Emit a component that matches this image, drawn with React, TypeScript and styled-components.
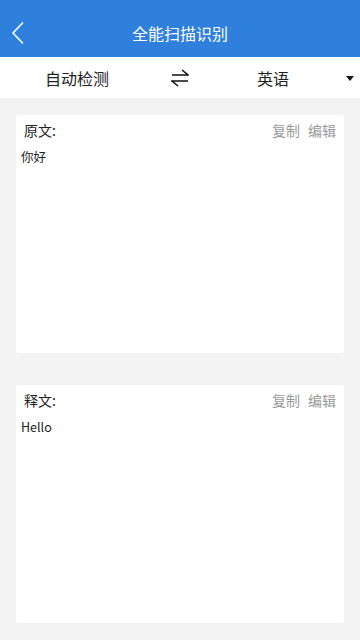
import React from "react";
import styled, { createGlobalStyle } from "styled-components";

const Global = createGlobalStyle`
  html, body { margin: 0; padding: 0; background: #f2f3f2; }
  body { font-family: "Noto Sans CJK SC", "Noto Sans", sans-serif; }
  * { box-sizing: border-box; }
`;

const Page = styled.div`
  width: 360px;
  height: 640px;
  display: flex;
  flex-direction: column;
  background: #f2f3f2;
  overflow: hidden;
`;

const Header = styled.div`
  height: 57px;
  background: #2f7fdc;
  display: grid;
  grid-template-columns: 48px 1fr 48px;
  align-items: center;
  color: #fff;
`;

const Back = styled.div`
  display: flex;
  align-items: center;
  padding-left: 11px;
  padding-top: 8px;
`;

const Title = styled.div`
  text-align: center;
  font-size: 16px;
  padding-top: 8px;
`;

const LangBar = styled.div`
  height: 41px;
  background: #fff;
  display: grid;
  grid-template-columns: 154px 52px 1fr 20px;
  align-items: center;
  font-size: 16px;
  color: #222;
`;

const Lang = styled.div`
  text-align: center;
  padding-top: 1px;
`;

const Swap = styled.div`
  display: flex;
  justify-content: center;
  align-items: center;
  padding-top: 1px;
`;

const Body = styled.div`
  flex: 1;
  display: flex;
  flex-direction: column;
  gap: 32px;
  padding: 17px 16px 0;
`;

const Card = styled.div`
  height: 238px;
  background: #fff;
  border-radius: 3px;
  padding: 4px 8px 0 5px;
`;

const CardHead = styled.div`
  display: flex;
  justify-content: space-between;
  align-items: center;
  height: 22px;
`;

const Label = styled.div`
  font-size: 14px;
  color: #222;
  padding-left: 3px;
`;

const Actions = styled.div`
  display: flex;
  gap: 8px;
  font-size: 14px;
  color: #999;
`;

const Content = styled.div`
  font-size: 12.5px;
  color: #222;
  margin-top: 6px;
`;

const TextCard = ({ label, text }: { label: string; text: string }) => (
  <Card>
    <CardHead>
      <Label>{label}</Label>
      <Actions>
        <span>复制</span>
        <span>编辑</span>
      </Actions>
    </CardHead>
    <Content>{text}</Content>
  </Card>
);

export default function App() {
  return (
    <Page>
      <Global />
      <Header>
        <Back>
          <svg width="14" height="24" viewBox="0 0 14 24">
            <path d="M12 1.5 L2 12 L12 22.5" fill="none" stroke="#fff" strokeWidth="1.6" />
          </svg>
        </Back>
        <Title>全能扫描识别</Title>
        <div />
      </Header>
      <LangBar>
        <Lang>自动检测</Lang>
        <Swap>
          <svg width="18" height="18" viewBox="0 0 18 18">
            <path d="M1 6 H17 L11 1" fill="none" stroke="#111" strokeWidth="1.5" />
            <path d="M17 12 H1 L7 17" fill="none" stroke="#111" strokeWidth="1.5" />
          </svg>
        </Swap>
        <Lang>英语</Lang>
        <Swap>
          <svg width="8" height="5" viewBox="0 0 8 5">
            <path d="M0 0 H8 L4 5 Z" fill="#111" />
          </svg>
        </Swap>
      </LangBar>
      <Body>
        <TextCard label="原文:" text="你好" />
        <TextCard label="释文:" text="Hello" />
      </Body>
    </Page>
  );
}
